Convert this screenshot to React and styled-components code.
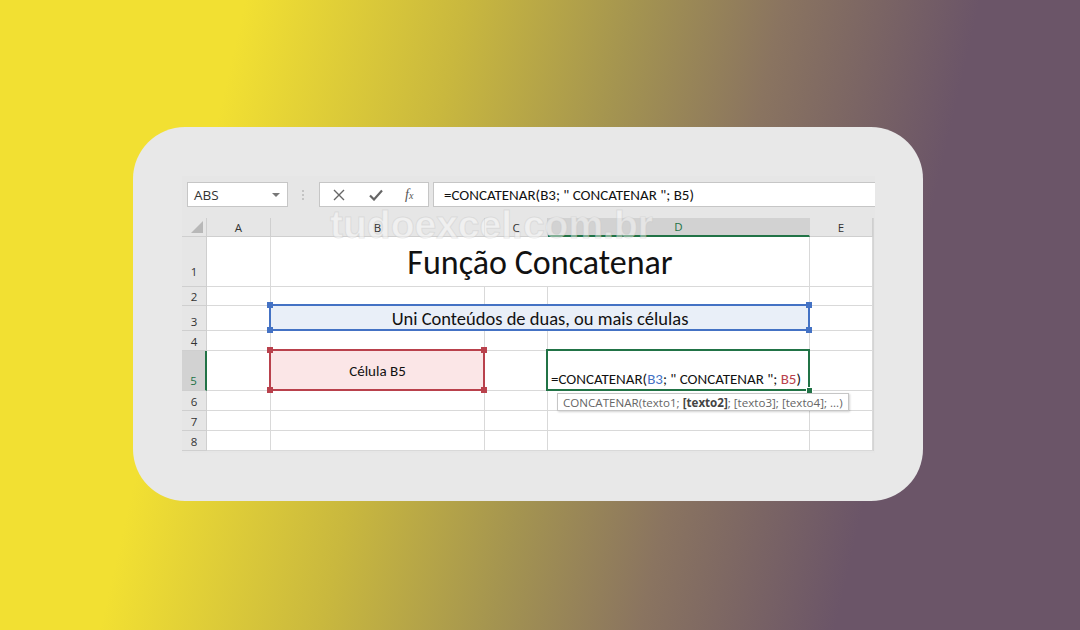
import React from "react";
import styled, { createGlobalStyle } from "styled-components";

const GlobalStyle = createGlobalStyle`
  html, body {
    margin: 0;
    height: 630px;
    overflow: hidden;
  }
  body {
    background: linear-gradient(103deg, #f2e032 20%, #c9b83e 38%, #a49450 52%, #8a7460 64%, #6b5568 80%);
    font-family: "Open Sans", "Liberation Sans", sans-serif;
  }
`;

const cellFont = `"Carlito", "Lato", "Liberation Sans", sans-serif`;
const green = "#217346";
const blue = "#4472c4";
const red = "#b9414c";

const Page = styled.div`
  padding: 127px 0 0 133px;
`;

const Card = styled.div`
  box-sizing: border-box;
  width: 790px;
  height: 374px;
  padding: 49px 48px 48px 49px;
  border-radius: 52px;
  background: #e8e8e8;
`;

const Sheet = styled.div`
  position: relative;
  width: 693px;
  background: #e6e6e6;
  padding-bottom: 2px;
`;

const Toolbar = styled.div`
  display: flex;
  align-items: flex-start;
  height: 42px;
  padding: 6px 0 0 5px;
  box-sizing: border-box;
`;

const Box = styled.div`
  box-sizing: border-box;
  height: 25px;
  background: #fff;
  border: 1px solid #c6c6c6;
  display: flex;
  align-items: center;
`;

const NameBox = styled(Box)`
  width: 101px;
  justify-content: space-between;
  padding: 0 7px 0 6px;
  font-size: 13.5px;
  color: #333;
`;

const Caret = styled.span`
  width: 0;
  height: 0;
  border-left: 4px solid transparent;
  border-right: 4px solid transparent;
  border-top: 4px solid #777;
`;

const Grip = styled.div`
  width: 31px;
  height: 25px;
  display: flex;
  align-items: center;
  justify-content: center;
  svg {
    display: block;
  }
`;

const FxButtons = styled(Box)`
  width: 110px;
  padding-left: 13px;
  color: #666;
`;

const IconSlot = styled.span`
  width: ${(p) => p.$w}px;
  display: flex;
  align-items: center;
  justify-content: flex-start;
`;

const Fx = styled.span`
  font-family: "Liberation Serif", "DejaVu Serif", serif;
  font-style: italic;
  font-size: 14px;
  color: #555;
  padding-left: 8px;
  small {
    font-size: 10px;
  }
`;

const FormulaInput = styled(Box)`
  flex: 1;
  margin-left: 4px;
  border-right: none;
  padding-left: 10px;
  font-family: ${cellFont};
  font-size: 15px;
  color: #111;
`;

const Grid = styled.div`
  display: grid;
  grid-template-columns: 25px 64px 214px 63px 262px 63px;
  grid-template-rows: 19px 50px 19px 25px 20px 40px 20px 20px 20px;
  width: 691px;
  background: #fff;
  border-right: 1px solid #d4d4d4;
`;

const Corner = styled.div`
  background: #e6e6e6;
  border-right: 1px solid #cfcfcf;
  border-bottom: 1px solid #cfcfcf;
  position: relative;
  &::after {
    content: "";
    position: absolute;
    right: 3px;
    bottom: 3px;
    border-left: 12px solid transparent;
    border-bottom: 12px solid #b8b8b8;
  }
`;

const ColHead = styled.div`
  box-sizing: border-box;
  display: flex;
  align-items: center;
  justify-content: center;
  font-size: 11.5px;
  background: ${(p) => (p.$active ? "#d2d2d2" : "#e6e6e6")};
  color: ${(p) => (p.$active ? green : "#333")};
  border-right: 1px solid ${(p) => (p.$active ? "#d2d2d2" : "#cfcfcf")};
  border-bottom: ${(p) => (p.$active ? `2px solid ${green}` : "1px solid #cfcfcf")};
`;

const RowHead = styled.div`
  box-sizing: border-box;
  display: flex;
  align-items: flex-end;
  justify-content: center;
  padding-bottom: ${(p) => p.$pad || 1}px;
  font-size: 11.5px;
  background: ${(p) => (p.$active ? "#d2d2d2" : "#e6e6e6")};
  color: ${(p) => (p.$active ? green : "#333")};
  border-right: ${(p) => (p.$active ? `2px solid ${green}` : "1px solid #cfcfcf")};
  border-bottom: 1px solid #cfcfcf;
`;

const Cell = styled.div`
  box-sizing: border-box;
  position: relative;
  grid-column: span ${(p) => p.$span || 1};
  border-right: 1px solid #d9d9d9;
  border-bottom: 1px solid #d9d9d9;
  font-family: ${cellFont};
  color: #111;
`;

const Title = styled(Cell)`
  display: flex;
  align-items: center;
  justify-content: center;
  padding-top: 1px;
  font-size: 34px;
`;

const Range = styled(Cell)`
  display: flex;
  align-items: center;
  justify-content: center;
  background: ${(p) => p.$fill};
  font-size: ${(p) => p.$size}px;
  &::before {
    content: "";
    position: absolute;
    inset: -2px -1px -1px -2px;
    border: 2px solid ${(p) => p.$color};
    pointer-events: none;
  }
`;

const Handle = styled.span`
  position: absolute;
  width: 6px;
  height: 6px;
  background: ${(p) => p.$color};
  ${(p) => (p.$pos[0] === "t" ? "top: -4px;" : "bottom: -3px;")}
  ${(p) => (p.$pos[1] === "l" ? "left: -4px;" : "right: -3px;")}
  z-index: 2;
`;

const ActiveCell = styled(Cell)`
  display: flex;
  align-items: flex-end;
  padding: 0 0 2px 3px;
  font-size: 15px;
  white-space: nowrap;
  z-index: 3;
  &::before {
    content: "";
    position: absolute;
    inset: -2px -1px -1px -2px;
    border: 2px solid ${green};
    pointer-events: none;
  }
`;

const Ref = styled.span`
  color: ${(p) => p.$color};
`;

const FillHandle = styled.span`
  position: absolute;
  right: -4px;
  bottom: -4px;
  width: 5px;
  height: 5px;
  background: ${green};
  border: 1px solid #fff;
`;

const Tooltip = styled.div`
  position: absolute;
  left: 9px;
  top: 42px;
  height: 18px;
  box-sizing: border-box;
  padding: 0 5px;
  display: flex;
  align-items: center;
  background: #fff;
  border: 1px solid #c6c6c6;
  box-shadow: 1px 1px 2px rgba(0, 0, 0, 0.18);
  font-family: "Open Sans", "Liberation Sans", sans-serif;
  font-size: 11.6px;
  color: #666;
  white-space: nowrap;
  b {
    color: #444;
  }
`;

const Watermark = styled.div`
  position: absolute;
  left: 148px;
  top: 29px;
  font-family: "Liberation Sans", Arial, sans-serif;
  font-weight: bold;
  font-size: 39px;
  line-height: 1;
  color: rgba(255, 255, 255, 0.45);
  -webkit-text-stroke: 1px rgba(190, 190, 190, 0.35);
  pointer-events: none;
  z-index: 5;
`;

const rows = [1, 2, 3, 4, 5, 6, 7, 8];

function renderRow(n) {
  const head = (
    <RowHead key={`h${n}`} $active={n === 5} $pad={n === 1 ? 7 : n === 5 ? 2 : 1}>
      {n}
    </RowHead>
  );
  if (n === 1) {
    return [
      head,
      <Cell key="a1" />,
      <Title key="t" $span={3}>Função Concatenar</Title>,
      <Cell key="e1" />,
    ];
  }
  if (n === 3) {
    return [
      head,
      <Cell key="a3" />,
      <Range key="r3" $span={3} $fill="#e9eff8" $color={blue} $size={18.5}>
        Uni Conteúdos de duas, ou mais células
        {["tl", "tr", "bl", "br"].map((p) => (
          <Handle key={p} $pos={p} $color={blue} />
        ))}
      </Range>,
      <Cell key="e3" />,
    ];
  }
  if (n === 5) {
    return [
      head,
      <Cell key="a5" />,
      <Range key="b5" $fill="#fbe6e7" $color={red} $size={15}>
        Célula B5
        {["tl", "tr", "bl", "br"].map((p) => (
          <Handle key={p} $pos={p} $color={red} />
        ))}
      </Range>,
      <Cell key="c5" />,
      <ActiveCell key="d5">
        <span>
          =CONCATENAR(<Ref $color={blue}>B3</Ref>; " CONCATENAR "; <Ref $color={red}>B5</Ref>)
        </span>
        <FillHandle />
        <Tooltip>
          CONCATENAR(texto1;&nbsp;<b>[texto2]</b>; [texto3]; [texto4]; ...)
        </Tooltip>
      </ActiveCell>,
      <Cell key="e5" />,
    ];
  }
  return [head, ...["a", "b", "c", "d", "e"].map((c) => <Cell key={c + n} />)];
}

export default function App() {
  return (
    <>
      <GlobalStyle />
      <Page>
        <Card>
          <Sheet>
            <Toolbar>
              <NameBox>
                ABS
                <Caret />
              </NameBox>
              <Grip>
                <svg width="3" height="10" viewBox="0 0 3 10">
                  <rect x="0" y="0" width="2" height="2" fill="#c4c4c4" />
                  <rect x="0" y="4" width="2" height="2" fill="#c4c4c4" />
                  <rect x="0" y="8" width="2" height="2" fill="#c4c4c4" />
                </svg>
              </Grip>
              <FxButtons>
                <IconSlot $w={36}>
                  <svg width="12" height="12" viewBox="0 0 12 12">
                    <path d="M1 1 L11 11 M11 1 L1 11" stroke="#666" strokeWidth="1.4" />
                  </svg>
                </IconSlot>
                <IconSlot $w={28}>
                  <svg width="14" height="12" viewBox="0 0 14 12">
                    <path d="M1 6.5 L5 10.5 L13 1.5" stroke="#666" strokeWidth="2.2" fill="none" />
                  </svg>
                </IconSlot>
                <Fx>
                  f<small>x</small>
                </Fx>
              </FxButtons>
              <FormulaInput>=CONCATENAR(B3; " CONCATENAR "; B5)</FormulaInput>
            </Toolbar>
            <Grid>
              <Corner />
              {["A", "B", "C", "D", "E"].map((c) => (
                <ColHead key={c} $active={c === "D"}>
                  {c}
                </ColHead>
              ))}
              {rows.map((n) => renderRow(n))}
            </Grid>
            <Watermark>tudoexcel.com.br</Watermark>
          </Sheet>
        </Card>
      </Page>
    </>
  );
}
